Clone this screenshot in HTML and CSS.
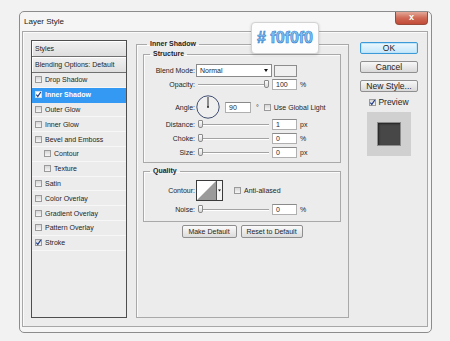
FILE: index.html
```html
<!DOCTYPE html>
<html>
<head>
<meta charset="utf-8">
<title>Layer Style</title>
<link rel="stylesheet" href="styles.css">
</head>
<body>
<div class="window">
  <div class="titlebar">
    <span class="title">Layer Style</span>
    <span class="close">x</span>
  </div>
  <div class="content">
    <div class="styles">
      <div class="hdr">Styles</div>
      <div class="hdr blendopt">Blending Options: Default</div>
      <div class="item"><i class="cb"></i>Drop Shadow</div>
      <div class="item sel"><i class="cb"><svg viewBox="0 0 7 7"><polyline points="1.3,3.6 2.8,5.4 5.8,1"/></svg></i>Inner Shadow</div>
      <div class="item"><i class="cb"></i>Outer Glow</div>
      <div class="item"><i class="cb"></i>Inner Glow</div>
      <div class="item"><i class="cb"></i>Bevel and Emboss</div>
      <div class="item sub"><i class="cb"></i>Contour</div>
      <div class="item sub"><i class="cb"></i>Texture</div>
      <div class="item"><i class="cb"></i>Satin</div>
      <div class="item"><i class="cb"></i>Color Overlay</div>
      <div class="item"><i class="cb"></i>Gradient Overlay</div>
      <div class="item"><i class="cb"></i>Pattern Overlay</div>
      <div class="item"><i class="cb"><svg viewBox="0 0 7 7"><polyline points="1.3,3.6 2.8,5.4 5.8,1"/></svg></i>Stroke</div>
    </div>

    <fieldset class="panel">
      <legend>Inner Shadow</legend>
      <fieldset class="group structure">
        <legend>Structure</legend>
        <div class="row r-blend">
          <span class="lbl">Blend Mode:</span>
          <div class="select">Normal<span class="arr"></span></div>
          <div class="swatch"></div>
        </div>
        <div class="row r-small">
          <span class="lbl">Opacity:</span>
          <div class="slider"><span class="thumb right"></span></div>
          <div class="num">100</div><span class="unit">%</span>
        </div>
        <div class="row r-angle">
          <span class="lbl">Angle:</span>
          <svg class="dial" viewBox="0 0 24 24"><circle cx="12" cy="12" r="11.2"/><line x1="12" y1="12" x2="12" y2="2"/><circle class="dot" cx="12" cy="12" r="0.9"/></svg>
          <div class="num num-angle">90</div><span class="deg">°</span>
          <i class="cb cb-gl"></i><span>Use Global Light</span>
        </div>
        <div class="row r-small r-first">
          <span class="lbl">Distance:</span>
          <div class="slider"><span class="thumb"></span></div>
          <div class="num">1</div><span class="unit">px</span>
        </div>
        <div class="row r-small">
          <span class="lbl">Choke:</span>
          <div class="slider"><span class="thumb"></span></div>
          <div class="num">0</div><span class="unit">%</span>
        </div>
        <div class="row r-small">
          <span class="lbl">Size:</span>
          <div class="slider"><span class="thumb"></span></div>
          <div class="num">0</div><span class="unit">px</span>
        </div>
      </fieldset>
      <fieldset class="group quality">
        <legend>Quality</legend>
        <div class="row r-contour">
          <span class="lbl">Contour:</span>
          <svg class="contour" viewBox="0 0 27 21">
            <rect x="0.5" y="0.5" width="26" height="20" fill="#fff" stroke="#3a3a3a"/>
            <polygon points="1,20 20,1 20,20" fill="#9a9a9a"/>
            <line x1="20.5" y1="1" x2="20.5" y2="20" stroke="#555"/>
            <rect x="21" y="1" width="5" height="19" fill="#f4f4f4"/>
            <polygon points="22,9.5 25,9.5 23.5,11.5" fill="#111"/>
          </svg>
          <i class="cb cb-aa"></i><span>Anti-aliased</span>
        </div>
        <div class="row r-small r-noise">
          <span class="lbl">Noise:</span>
          <div class="slider"><span class="thumb"></span></div>
          <div class="num">0</div><span class="unit">%</span>
        </div>
      </fieldset>
      <div class="btns">
        <button class="btn b-make">Make Default</button>
        <button class="btn b-reset">Reset to Default</button>
      </div>
    </fieldset>

    <div class="side">
      <button class="sbtn ok">OK</button>
      <button class="sbtn">Cancel</button>
      <button class="sbtn">New Style...</button>
      <div class="preview"><i class="cb"><svg viewBox="0 0 7 7"><polyline points="1.3,3.6 2.8,5.4 5.8,1"/></svg></i><span>Preview</span></div>
      <div class="pv"><div class="pv-in"></div></div>
    </div>
  </div>
  <div class="tip"># f0f0f0</div>
</div>
</body>
</html>
```

FILE: styles.css
```css
* { box-sizing: border-box; }

body {
  margin: 0;
  padding: 11px 0 0 19px;
  background: #f2f2f2;
  font-family: "Liberation Sans", Arial, sans-serif;
  font-size: 7px;
  color: #1e1e1e;
}

.window {
  position: relative;
  width: 413px;
  height: 322px;
  border: 1px solid #8c8c8c;
  border-radius: 5px;
  background: #f5f5f5;
  padding: 0 3px 5px 2px;
  display: flex;
  flex-direction: column;
}

.titlebar {
  height: 19px;
  display: flex;
  justify-content: space-between;
  align-items: flex-start;
}

.title {
  padding: 5px 0 0 2px;
  font-size: 8px;
  line-height: 10px;
  color: #222;
}

.close {
  width: 33px;
  height: 13px;
  border: 1px solid #9a4a3a;
  border-top: none;
  border-radius: 0 0 4px 4px;
  background: linear-gradient(#e4a898, #cf6a56 50%, #c24a36);
  color: #fff;
  font-weight: bold;
  font-size: 9px;
  line-height: 11px;
  text-align: center;
}

.content {
  flex: 1;
  display: flex;
  align-items: stretch;
  border: 1px solid #a7a7a7;
  box-shadow: inset 1px 1px 0 #fafafa;
  background: #ececec;
  padding: 8px 9px 8px 8px;
}

/* styles list */
.styles {
  width: 96px;
  flex: none;
  border: 1px solid #4e4e4e;
  background: #ececec;
}

.hdr {
  height: 16px;
  border-bottom: 1px solid #707070;
  background: linear-gradient(#f1f1f1, #dedede);
  box-shadow: inset 1px 1px 0 #fff;
  padding-left: 3px;
  line-height: 15px;
}

.item {
  height: 14.8px;
  display: flex;
  align-items: center;
  padding-left: 3px;
  border-bottom: 1px solid #f7f7f7;
}

.item.sub { padding-left: 12px; }

.item.sel {
  background: #3399f3;
  color: #fff;
  font-weight: bold;
  border-bottom-color: #3399f3;
}

.cb {
  display: inline-block;
  width: 7px;
  height: 7px;
  flex: none;
  border: 1px solid #9a9a9a;
  background: linear-gradient(#d6d6d6, #f6f6f6);
  margin-right: 3px;
  position: relative;
}

.cb svg {
  display: block;
  width: 7px;
  height: 7px;
  margin: -1px 0 0 -1px;
}

.cb polyline {
  fill: none;
  stroke: #233f86;
  stroke-width: 1.2;
}

.item.sel .cb { background: #fff; border-color: #cde; }

/* main panel */
fieldset {
  margin: 0;
  min-width: 0;
}

legend {
  font-weight: bold;
  line-height: 8px;
  padding: 0 3px;
}

.panel {
  width: 213px;
  flex: none;
  margin-left: 9px;
  padding: 0 7px 0 6px;
  border: 1px solid #a9a9a9;
  box-shadow: inset 1px 1px 0 #fbfbfb;
  display: flex;
  flex-direction: column;
}

.panel > legend { margin-left: 4px; }

.group {
  border: 1px solid #a9a9a9;
  box-shadow: inset 1px 1px 0 #fbfbfb;
  padding: 0;
  display: flex;
  flex-direction: column;
}

.group > legend { margin-left: 6px; }

.structure { margin-top: 2px; padding: 6px 0 4px 0; }
.quality { margin-top: 4px; padding: 5px 0 6px 0; }

.row {
  display: flex;
  align-items: center;
  white-space: nowrap;
}

.lbl {
  width: 52px;
  flex: none;
  text-align: right;
  padding-right: 1px;
}

.r-blend { height: 13px; }
.r-small { height: 11px; margin-top: 3px; }
.r-blend + .r-small { margin-top: 2px; }
.r-angle { height: 24px; margin-top: 5px; }
.r-first { margin-top: 0; }
.r-contour { height: 21px; }
.r-noise { margin-top: 3px; }

.select {
  width: 76px;
  height: 13px;
  border: 1px solid #8a8a8a;
  background: #fff;
  padding-left: 3px;
  line-height: 11px;
  display: flex;
  justify-content: space-between;
  align-items: center;
}

.arr {
  width: 0;
  height: 0;
  border-left: 2.5px solid transparent;
  border-right: 2.5px solid transparent;
  border-top: 3px solid #111;
  margin-right: 3px;
}

.swatch {
  width: 23px;
  height: 12px;
  margin-left: 2px;
  border: 1px solid #8d8d8d;
  background: #f0f0f0;
}

.slider {
  position: relative;
  width: 71px;
  height: 11px;
  margin-left: 2px;
}

.slider::before {
  content: "";
  position: absolute;
  left: 0;
  right: 0;
  top: 5px;
  height: 1px;
  background: #a3a3a3;
  box-shadow: 0 1px 0 #fff;
}

.thumb {
  position: absolute;
  left: 0;
  top: 1px;
  width: 5px;
  height: 8px;
  border: 1px solid #8a8a8a;
  border-radius: 1px 1px 2px 2px;
  background: linear-gradient(#fdfdfd, #d8d8d8);
}

.thumb.right { left: auto; right: 0; }

.num {
  width: 25px;
  height: 11px;
  margin-left: 3px;
  border: 1px solid #b0b0b0;
  border-top-color: #8a8a8a;
  background: #fff;
  padding-left: 3px;
  line-height: 9px;
}

.unit { margin-left: 3px; }

.dial {
  width: 24px;
  height: 24px;
  flex: none;
}

.dial circle {
  fill: #efefef;
  stroke: #3f4d70;
  stroke-width: 1;
}

.dial line { stroke: #2a2a2a; stroke-width: 1; }
.dial .dot { fill: #222; stroke: none; }

.num-angle { width: 26px; margin-left: 5px; }
.deg { margin-left: 5px; }
.cb-gl { margin-left: 5px; margin-right: 3px; }

.contour {
  width: 27px;
  height: 21px;
  flex: none;
  margin-left: 0;
}

.cb-aa { margin-left: 11px; margin-right: 3px; }

.btns {
  display: flex;
  justify-content: center;
  gap: 4px;
  margin-top: 3px;
}

.btn {
  height: 13px;
  padding: 0;
  border: 1px solid #8e8e8e;
  border-radius: 2px;
  background: linear-gradient(#fafafa, #dcdcdc);
  font-family: "Liberation Sans", Arial, sans-serif;
  font-size: 7px;
  line-height: 11px;
  color: #1e1e1e;
}

.b-make { width: 55px; }
.b-reset { width: 62px; }

/* side column */
.side {
  width: 58px;
  flex: none;
  margin-left: 11px;
  display: flex;
  flex-direction: column;
  align-items: center;
  padding-top: 2px;
  gap: 7px;
}

.sbtn {
  width: 58px;
  height: 12px;
  padding: 0;
  border: 1px solid #8f8f8f;
  border-radius: 2px;
  background: linear-gradient(#f7f7f7, #d9d9d9);
  font-family: "Liberation Sans", Arial, sans-serif;
  font-size: 8.5px;
  line-height: 10px;
  color: #1e1e1e;
}

.sbtn.ok {
  border-color: #3d9ad8;
  background: linear-gradient(#eef8fe, #c3e7fa);
  box-shadow: inset 0 0 0 1px #bfe4f8;
}

.preview {
  display: flex;
  align-items: center;
  font-size: 8.5px;
  margin-top: -2px;
  height: 10px;
}

.preview .cb { margin-right: 2px; }

.pv {
  width: 44px;
  height: 44px;
  margin-top: -2px;
  background: #d0d0d0;
  display: flex;
  align-items: center;
  justify-content: center;
}

.pv-in {
  width: 24px;
  height: 24px;
  background: #474747;
  border: 1px solid #8c8c8c;
  box-shadow: inset 1px 1px 2px #222;
}

/* colour tooltip */
.tip {
  position: absolute;
  left: 231px;
  top: 10px;
  width: 68px;
  height: 32px;
  background: #fdfdfd;
  border: 1px solid #d3d3d3;
  border-radius: 4px;
  box-shadow: 0 1px 3px rgba(0, 0, 0, 0.18);
  display: flex;
  align-items: center;
  justify-content: center;
  font-size: 16px;
  font-weight: bold;
  color: #86c1f2;
  -webkit-text-stroke: 0.6px #2f7dcc;
}
```
